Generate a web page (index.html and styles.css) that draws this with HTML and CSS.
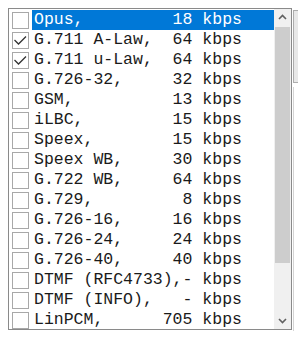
FILE: index.html
```html
<!DOCTYPE html>
<html lang="en">
<head>
    <meta charset="UTF-8">
    <meta name="viewport" content="width=device-width, initial-scale=1.0">
    <title>Codecs</title>
    <link rel="stylesheet" href="styles.css">
</head>
<body>
    <div class="dialog">
        <div class="codec-list">
            <ul class="rows">
                <li class="row"><span class="box"></span><span class="label selected">Opus,         18 kbps</span></li>
                <li class="row"><span class="box checked"><svg viewBox="0 0 17 17"><polyline points="2.5,8 6.5,12 14,4.5"/></svg></span><span class="label">G.711 A-Law,  64 kbps</span></li>
                <li class="row"><span class="box checked"><svg viewBox="0 0 17 17"><polyline points="2.5,8 6.5,12 14,4.5"/></svg></span><span class="label">G.711 u-Law,  64 kbps</span></li>
                <li class="row"><span class="box"></span><span class="label">G.726-32,     32 kbps</span></li>
                <li class="row"><span class="box"></span><span class="label">GSM,          13 kbps</span></li>
                <li class="row"><span class="box"></span><span class="label">iLBC,         15 kbps</span></li>
                <li class="row"><span class="box"></span><span class="label">Speex,        15 kbps</span></li>
                <li class="row"><span class="box"></span><span class="label">Speex WB,     30 kbps</span></li>
                <li class="row"><span class="box"></span><span class="label">G.722 WB,     64 kbps</span></li>
                <li class="row"><span class="box"></span><span class="label">G.729,         8 kbps</span></li>
                <li class="row"><span class="box"></span><span class="label">G.726-16,     16 kbps</span></li>
                <li class="row"><span class="box"></span><span class="label">G.726-24,     24 kbps</span></li>
                <li class="row"><span class="box"></span><span class="label">G.726-40,     40 kbps</span></li>
                <li class="row"><span class="box"></span><span class="label">DTMF (RFC4733),- kbps</span></li>
                <li class="row"><span class="box"></span><span class="label">DTMF (INFO),   - kbps</span></li>
                <li class="row"><span class="box"></span><span class="label">LinPCM,      705 kbps</span></li>
            </ul>
            <div class="scrollbar">
                <div class="arrow"><svg viewBox="0 0 17 17"><polyline points="5,10 8.5,6.5 12,10"/></svg></div>
                <div class="thumb"></div>
                <div class="track"></div>
                <div class="arrow"><svg viewBox="0 0 17 17"><polyline points="5,7 8.5,10.5 12,7"/></svg></div>
            </div>
        </div>
        <div class="side">
            <div class="side-button"></div>
            <div class="side-panel"></div>
        </div>
    </div>
</body>
</html>
```

FILE: styles.css
```css
html, body {
    overflow: hidden;
}

body {
    margin: 8px 0 0 8px;
    background: #ffffff;
    font-family: 'Liberation Mono', 'Courier New', monospace;
}

.dialog {
    display: flex;
    align-items: flex-start;
}

/* Список кодеков */
.codec-list {
    display: flex;
    flex: none;
    width: 282px;
    height: 320px;
    border: 1px solid #8a8a8a;
    background: #fff;
}

.rows {
    flex: 1;
    list-style: none;
    margin: 0;
    padding: 1px 0 0 0;
    overflow: hidden;
}

.row {
    display: flex;
    align-items: center;
    height: 20px;
    padding-left: 3px;
}

.box {
    flex: none;
    width: 15px;
    height: 15px;
    border: 1px solid #a8a8a8;
    background: #fff;
    margin-right: 3px;
}

.box svg {
    display: block;
    width: 17px;
    height: 17px;
    margin: -1px;
    fill: none;
    stroke: #333;
    stroke-width: 1.3;
}

.label {
    flex: 1;
    height: 20px;
    line-height: 20px;
    padding-left: 2px;
    font-size: 16.5px;
    color: #1a1a1a;
    white-space: pre;
}

.label.selected {
    background: #0078d7;
    color: #fff;
}

/* Полоса прокрутки */
.scrollbar {
    flex: none;
    width: 17px;
    display: flex;
    flex-direction: column;
    background: #f0f0f0;
}

.arrow {
    height: 17px;
}

.arrow svg {
    display: block;
    width: 17px;
    height: 17px;
    fill: none;
    stroke: #606060;
    stroke-width: 1.6;
}

.thumb {
    height: 236px;
    margin: 1px 1px 0 1px;
    background: #cdcdcd;
}

.track {
    flex: 1;
}

/* Соседние элементы справа */
.side {
    flex: none;
    width: 5px;
    margin-left: 1px;
    display: flex;
    flex-direction: column;
}

.side-button {
    height: 71px;
    margin-top: 2px;
    border: 1px solid #adadad;
    border-right: none;
    background: #e8e8e8;
}

.side-panel {
    height: 244px;
    margin-top: 4px;
    border-left: 1px solid #d4d4d4;
}
```
